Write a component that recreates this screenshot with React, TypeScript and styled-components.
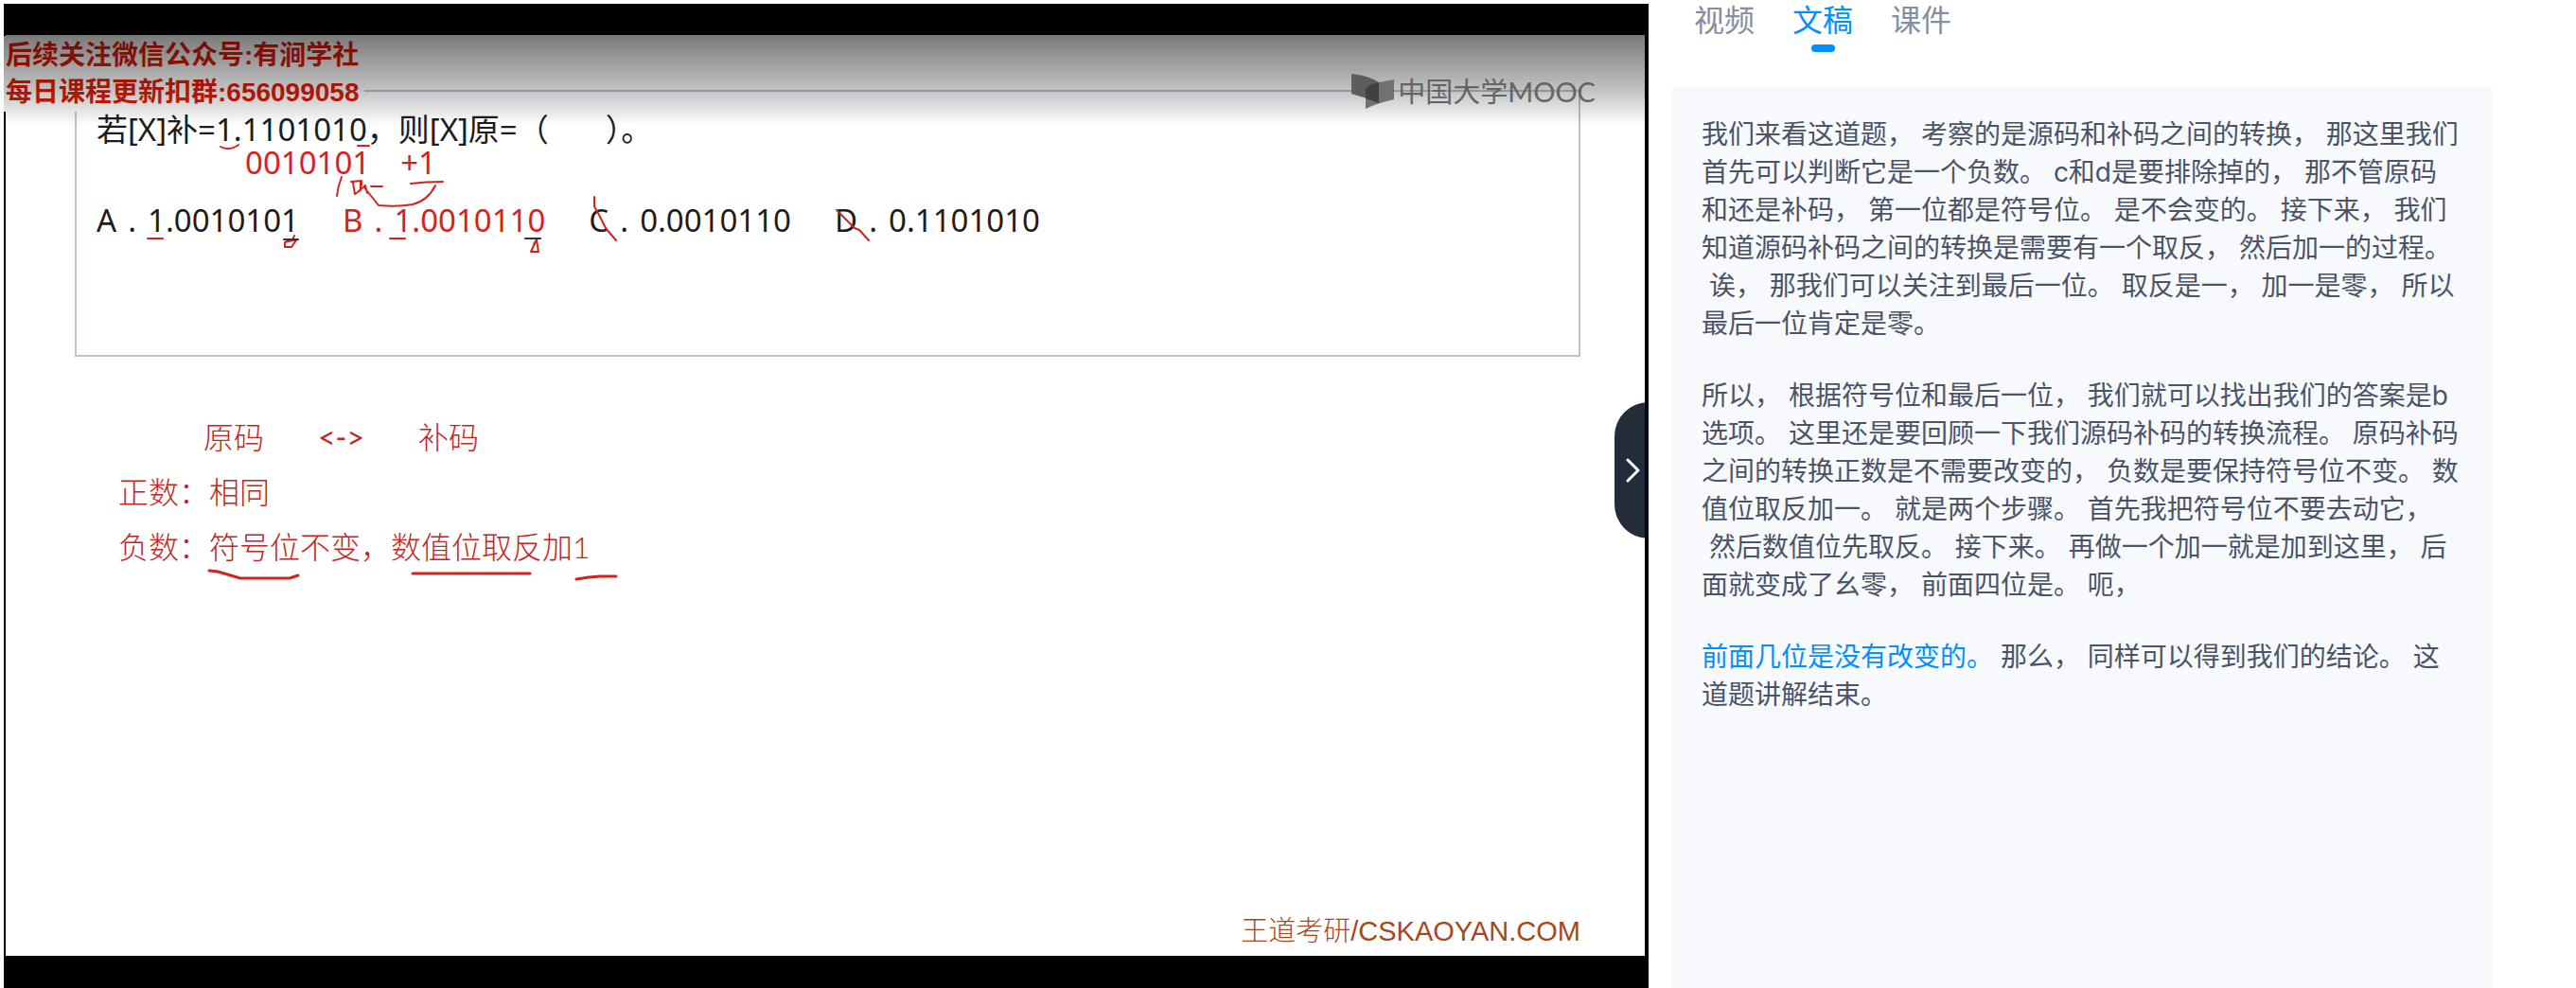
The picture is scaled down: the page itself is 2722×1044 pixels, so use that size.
import React, { useState } from 'react';
import styled, { createGlobalStyle } from 'styled-components';

const cjk = '"Noto Sans CJK SC", sans-serif';

const GlobalStyle = createGlobalStyle`
  * { box-sizing: border-box; }
  body { margin: 0; background: #fff; font-family: Inter, ${cjk}; }
  p { margin: 0; }
`;

const Page = styled.div`
  display: flex;
  gap: 24px;
  min-height: 100vh;
  padding: 4px 88px 0 4px;
`;

const Video = styled.main`
  position: relative;
  display: flex;
  flex: 1;
  min-width: 0;
  padding: 33px 4px 34px 2px;
  background: #000;
`;

const Slide = styled.section`
  position: relative;
  display: flex;
  flex-direction: column;
  flex: 1;
  min-width: 0;
  overflow: hidden;
  padding: 58px 68px 6px 73px;
  background: #fff;
`;

const QuestionBox = styled.div`
  height: 282px;
  padding: 20px 0 0 21px;
  border: 2px solid #b9c5ce;
  color: #1c1c1c;
  font: 33px/40px "Noto Sans", ${cjk};
  white-space: nowrap;
`;

const Blank = styled.span`
  display: inline-block;
  width: 60px;
`;

const Working = styled.p`
  display: flex;
  gap: 32px;
  padding-left: 157px;
  color: #d8201c;
  line-height: 30px;
`;

const Options = styled.div`
  display: flex;
  gap: 46px;
  margin-top: 22px;
  line-height: 48px;
`;

const Option = styled.p<{ $correct?: boolean }>`
  display: flex;
  color: ${(p) => (p.$correct ? '#d8201c' : 'inherit')};
`;

const Dot = styled.span`
  width: 33px;
  text-align: center;
`;

const Notes = styled.div`
  display: flex;
  flex-direction: column;
  margin-top: 56px;
  padding-left: 46px;
  color: #c4261e;
  font: 300 32px/58px Lato, ${cjk};
  white-space: nowrap;
`;

const NotesHeading = styled.p`
  display: flex;
  gap: 57px;
  padding-left: 90px;
`;

const Arrow = styled.span`
  font-weight: 400;
`;

const Credit = styled.p`
  margin-top: auto;
  align-self: flex-end;
  color: #a5481c;
  font: 29px/40px "Liberation Sans", ${cjk};
`;

const CreditName = styled.span`
  font-weight: 300;
`;

const Ink = styled.svg`
  position: absolute;
  top: 0;
  left: 0;
  fill: none;
  stroke: #cf2420;
  stroke-width: 2;
  stroke-linecap: round;
  stroke-linejoin: round;
`;

const Notice = styled.div`
  position: absolute;
  top: 34px;
  left: 0;
  width: 381px;
  padding: 1px 2px;
  background: #fff;
  color: #df1c0a;
  font: 700 28px/39px "Liberation Sans", ${cjk};
  white-space: nowrap;
`;

const Shade = styled.div`
  position: absolute;
  top: 33px;
  left: 0;
  right: 4px;
  height: 96px;
  background: linear-gradient(rgba(0, 0, 0, 0.52), rgba(0, 0, 0, 0.23) 62%, rgba(0, 0, 0, 0.11) 82%, rgba(0, 0, 0, 0));
  pointer-events: none;
`;

const Brand = styled.div`
  position: absolute;
  top: 73px;
  right: 56px;
  display: flex;
  align-items: center;
  gap: 3px;
  color: #626565;
  font: 29px/40px Lato, ${cjk};
`;

const CollapseButton = styled.button`
  position: absolute;
  top: 421px;
  right: 0;
  display: flex;
  align-items: center;
  justify-content: center;
  width: 36px;
  height: 144px;
  padding: 0;
  border: 0;
  border-radius: 36px 0 0 36px;
  background: rgba(0, 8, 25, 0.86);
  cursor: pointer;
`;

const Side = styled.aside`
  display: flex;
  flex-direction: column;
  flex: 0 0 868px;
`;

const Tabs = styled.nav`
  display: flex;
  gap: 40px;
  height: 88px;
  padding-left: 24px;
`;

const Tab = styled.button<{ $active: boolean }>`
  display: flex;
  flex-direction: column;
  align-items: center;
  gap: 9px;
  height: 51px;
  padding: 2px 0 0;
  border: 0;
  background: none;
  color: ${(p) => (p.$active ? '#0091ff' : '#858d9e')};
  font: 32px/32px Inter, ${cjk};
  cursor: pointer;

  &::after {
    content: '';
    width: 25px;
    height: 8px;
    border-radius: 4px;
    background: ${(p) => (p.$active ? '#0091ff' : 'transparent')};
  }
`;

const Transcript = styled.article`
  display: flex;
  flex-direction: column;
  flex: 1;
  gap: 36px;
  padding: 30px 32px;
  background: #f8f9fd;
  color: #4a5468;
  font-size: 28px;
  line-height: 40px;
`;

const Current = styled.span`
  color: #0091ff;
`;

interface Paragraph {
  current?: string;
  sentences: string[];
}

const paragraphs: Paragraph[] = [
  {
    sentences: [
      '我们来看这道题，', '考察的是源码和补码之间的转换，', '那这里我们首先可以判断它是一个负数。',
      'c和d是要排除掉的，', '那不管原码和还是补码，', '第一位都是符号位。', '是不会变的。', '接下来，',
      '我们知道源码补码之间的转换是需要有一个取反，', '然后加一的过程。', '诶，',
      '那我们可以关注到最后一位。', '取反是一，', '加一是零，', '所以最后一位肯定是零。',
    ],
  },
  {
    sentences: [
      '所以，', '根据符号位和最后一位，', '我们就可以找出我们的答案是b选项。',
      '这里还是要回顾一下我们源码补码的转换流程。', '原码补码之间的转换正数是不需要改变的，',
      '负数是要保持符号位不变。', '数值位取反加一。', '就是两个步骤。', '首先我把符号位不要去动它，',
      '然后数值位先取反。', '接下来。', '再做一个加一就是加到这里，', '后面就变成了幺零，', '前面四位是。', '呃，',
    ],
  },
  {
    current: '前面几位是没有改变的。',
    sentences: ['那么，', '同样可以得到我们的结论。', '这道题讲解结束。'],
  },
];

// A line may break before the gap between two sentences, and the gap is kept.
const gap = '\u200b\u00a0';

const options = [
  { letter: 'A', value: '1.0010101' },
  { letter: 'B', value: '1.0010110', correct: true },
  { letter: 'C', value: '0.0010110' },
  { letter: 'D', value: '0.1101010' },
];

const tabs = ['视频', '文稿', '课件'];

function Handwriting() {
  return (
    <Ink width="1732" height="973" viewBox="6 37 1732 973" aria-hidden="true">
      <path d="M233 155Q242 160 252 153M378 154H390M361 187Q357 197 356 207" />
      <path d="M371 192L382 191V196M373 193L375 205L381 201V193M379 202L386 196L388 204M385 198L400 217Q420 219 436 216Q452 212 460 196M392 197H404M434 194Q450 192 468 192" />
      <path d="M156 252H172M412 252H428" />
      <path d="M311 249L309 254L301 256V261L308 261L313 254H303" />
      <path d="M567 253L561 266H569L567 253L564 258" />
      <path d="M628 208V218L634 229L640 241L651 254M884 222L895 233L903 241L908 243L918 254" />
      <path stroke="#23363a" d="M300 253H315M555 252H571" />
      <path strokeWidth="3" d="M221 603L230 604L254 611H306L315 608M436 606H560M609 612L622 610L634 609H651" />
    </Ink>
  );
}

function BookMark() {
  return (
    <svg width="46" height="38" viewBox="0 0 46 38" aria-hidden="true">
      <path d="M0 0Q19 2 29 9V31Q15 25 0 21Z" fill="#5c5d5e" />
      <path d="M15 16Q18 11 29 9L45 6V27Q27 31 15 37Z" fill="#707172" />
      <path d="M15 16Q18 11 29 9V31L15 26Z" fill="#3f4142" />
    </svg>
  );
}

export default function App() {
  const [active, setActive] = useState('文稿');
  return (
    <>
      <GlobalStyle />
      <Page>
        <Video>
          <Slide>
            <QuestionBox>
              <p>若[X]补=1.1101010，则[X]原=（<Blank />）。</p>
              <Working>
                <span>0010101</span>
                <span>+1</span>
              </Working>
              <Options>
                {options.map((o) => (
                  <Option key={o.letter} $correct={o.correct}>
                    {o.letter}
                    <Dot>.</Dot>
                    {o.value}
                  </Option>
                ))}
              </Options>
            </QuestionBox>
            <Notes>
              <NotesHeading>
                <span>原码</span>
                <Arrow>&lt;-&gt;</Arrow>
                <span>补码</span>
              </NotesHeading>
              <p>正数：相同</p>
              <p>负数：符号位不变，数值位取反加1</p>
            </Notes>
            <Credit>
              <CreditName>王道考研</CreditName>/CSKAOYAN.COM
            </Credit>
            <Handwriting />
          </Slide>
          <Notice>
            <p>后续关注微信公众号:有涧学社</p>
            <p>每日课程更新扣群:656099058</p>
          </Notice>
          <Shade />
          <Brand>
            <BookMark />
            <span>中国大学MOOC</span>
          </Brand>
          <CollapseButton type="button" aria-label="收起侧栏">
            <svg width="36" height="28" viewBox="0 0 36 28" fill="none" stroke="#fff" strokeWidth="3" strokeLinecap="round" strokeLinejoin="round">
              <path d="M14 3L25 14L14 25" />
            </svg>
          </CollapseButton>
        </Video>
        <Side>
          <Tabs>
            {tabs.map((t) => (
              <Tab key={t} type="button" $active={t === active} onClick={() => setActive(t)}>
                {t}
              </Tab>
            ))}
          </Tabs>
          <Transcript>
            {paragraphs.map(({ current, sentences }) => (
              <p key={sentences[0]}>
                {current && <Current>{current}</Current>}
                {(current ? gap : '') + sentences.join(gap)}
              </p>
            ))}
          </Transcript>
        </Side>
      </Page>
    </>
  );
}
